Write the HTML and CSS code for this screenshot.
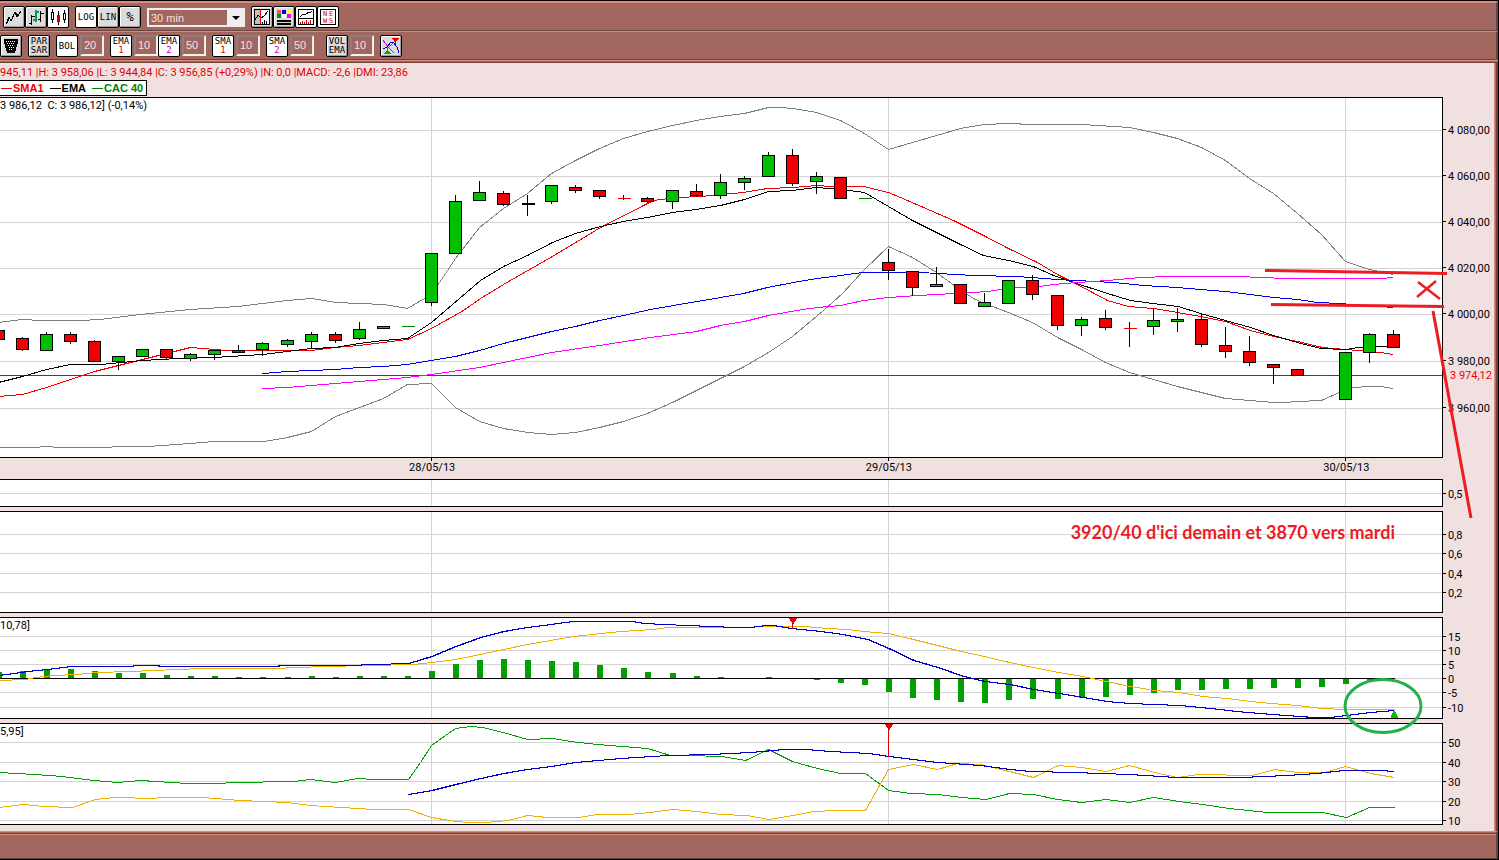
FILE: index.html
```html
<!DOCTYPE html>
<html lang="fr">
<head>
    <meta charset="UTF-8">
    <meta name="viewport" content="width=device-width, initial-scale=1.0">
    <title>CAC 40</title>
    <link rel="stylesheet" href="styles.css">
</head>
<body>
<div class="window">
    <div class="toolbar">
        <div class="group">
            <button class="tool" aria-label="Line"><svg viewBox="0 0 18 18"><path d="M1 16L4 9L6 13L10 4L12 9L16 3" fill="none" stroke="#000"/><path d="M2 15L5 9M11 5L13 8" fill="none" stroke="#000"/></svg></button>
            <button class="tool" aria-label="Bars"><svg viewBox="0 0 18 18"><path d="M4.500 7V17M2 15.500H4M5 8.500H8M13.500 3V14M11 11.500H13M14 5.500H17" stroke="#000"/><path d="M9 2V14M6 12H8M10 4H12" stroke="#00a050" stroke-width="2"/></svg></button>
            <button class="tool on" aria-label="Candles"><svg viewBox="0 0 18 18"><path d="M3.500 1V15M15.500 2V15" stroke="#000"/><path d="M2.500 4.500H4.500V11.500H2.500ZM14.500 5.500H16.500V11.500H14.500Z" fill="#fff" stroke="#000"/><path d="M9.500 3V17" stroke="#000"/><path d="M8 7H11V14H8Z" fill="#d00000"/></svg></button>
        </div>
        <div class="group">
            <button class="tool on">LOG</button>
            <button class="tool">LIN</button>
            <button class="tool percent">%</button>
        </div>
        <div class="period">
            <select aria-label="Period"><option>30 min</option></select>
        </div>
        <div class="group">
            <button class="tool" aria-label="Cursor"><svg viewBox="0 0 18 18"><path d="M1.500 1.500H16.500V16.500H1.500Z" fill="#fff" stroke="#000"/><path d="M2 2H7V16H2Z" fill="#c0c0c0"/><path d="M2 12L5 7L8 10L11 8L15 3" fill="none" stroke="#000"/><path d="M9.500 14V16M11.500 12V16M13.500 13V16" stroke="#000"/><path d="M7.500 1V16" stroke="#e00000"/></svg></button>
            <button class="tool" aria-label="Colors"><svg viewBox="0 0 18 18"><path d="M2 2H6V6H2Z" fill="#ff5050"/><path d="M7 2H11V6H7Z" fill="#0000e0"/><path d="M12 2H16V6H12Z" fill="#ffff40"/><path d="M2 6H6V10H2Z" fill="#009020"/><path d="M7 6H11V10H7Z" fill="#fff"/><path d="M12 6H16V10H12Z" fill="#ff00ff"/><path d="M2 12H16V14H2ZM2 15H16V17H2Z"/></svg></button>
            <button class="tool on" aria-label="Volume"><svg viewBox="0 0 18 18"><path d="M1.500 1.500H16.500V16.500H1.500ZM2 10.500H16" fill="none" stroke="#000"/><path d="M3 9L6 6L8 7L12 4L13 5L15 3" fill="none" stroke="#000"/><path d="M3.500 14V16M5.500 13V16M7.500 14V16M9.500 12V16M11.500 14V16M13.500 12V16" stroke="#e00000"/></svg></button>
            <button class="tool on" aria-label="News"><svg viewBox="0 0 18 18"><path d="M1.500 1.500H16.500V16.500H1.500Z" fill="none" stroke="#000"/><text x="4" y="8">N</text><text x="10" y="8">E</text><text x="4" y="15">W</text><text x="10" y="15">S</text></svg></button>
        </div>
    </div>
    <div class="toolbar indicators">
        <button class="tool" aria-label="Trash"><svg viewBox="0 0 18 18"><path d="M2 2H16V5L13 16H5L2 5Z"/><path d="M4 4.500H14M6 8.500H12M7 12.500H11" stroke="#fff" stroke-dasharray="1 1"/><path d="M5 6.500H13M7 10.500H12" stroke="#fff" stroke-dasharray="1 1"/></svg></button>
        <button class="tool">PAR<br>SAR</button>
        <div class="field"><button class="tool on">BOL</button><input aria-label="BOL" value="20"></div>
        <div class="group">
            <div class="field"><button class="tool on"><span>EMA<b class="one">1</b></span></button><input aria-label="EMA 1" value="10"></div>
            <div class="field"><button class="tool on"><span>EMA<b class="two">2</b></span></button><input aria-label="EMA 2" value="50"></div>
        </div>
        <div class="field"><button class="tool on"><span>SMA<b class="one">1</b></span></button><input aria-label="SMA 1" value="10"></div>
        <div class="field"><button class="tool on"><span>SMA<b class="two">2</b></span></button><input aria-label="SMA 2" value="50"></div>
        <div class="field volume"><button class="tool">VOL<br>EMA</button><input aria-label="VOL EMA" value="10"></div>
        <button class="tool" aria-label="Signals"><svg viewBox="0 0 18 18"><path d="M1 3L6 10L12 16M5 12L14 3" fill="none" stroke="#e000e0"/><path d="M1 12L5 10L9 5L11 5L15 10L17 16" fill="none" stroke="#0000d0"/><path d="M10 1H17L14 5V7H13V5Z" fill="#e00000"/><path d="M2 17L5 13V10H6V13L9 17Z" fill="#00b000"/></svg></button>
    </div>
    <main class="charts">
        <p class="quote">945,11 |H: 3 958,06 |L: 3 944,84 |C: 3 956,85 (+0,29%) |N: 0,0 |MACD: -2,6 |DMI: 23,86</p>
        <div class="legend"><span class="sma">SMA1</span><span class="ema">EMA</span><span class="cac">CAC 40</span></div>

        <section class="row">
            <div class="plot price">
                <p class="title">3 986,12&nbsp; C: 3 986,12] (-0,14%)</p>
                <svg viewBox="-0.5 97.5 1442 359" preserveAspectRatio="none">
                    <path class="grid" d="M-1 130H1442M-1 176H1442M-1 222H1442M-1 268H1442M-1 314H1442M-1 361H1442M-1 408H1442M431 97V457M888 97V457M1345 97V457"/>
                    <path class="last" d="M-1 375H1442"/>
                    <!-- Bollinger bands -->
                    <polyline class="band" points="-2,322 22,319 40,320 80,320 100,319 140,314 190,309 238,306 262,303 287,300 311,298 335,302 383,304 407,308 431,294 455,258 479,227 503,208 527,193 551,173 575,160 599,148 623,138 647,131 672,125 696,120 720,116 744,113 768,107 780,107 792,108 816,112 840,120 864,133 888,149 912,142 936,135 960,128 984,124 1008,123 1032,124 1081,124 1129,127 1153,132 1177,138 1201,147 1225,160 1249,178 1273,193 1297,213 1321,234 1345,261 1369,269 1393,274"/>
                    <polyline class="band" points="-2,447 34,447 46,446 58,447 106,447 118,446 147,446 190,443 214,441 264,441 287,437 311,431 335,416 359,407 383,398 407,384 431,383 455,407 479,421 503,428 527,432 551,434 575,432 599,427 623,421 647,413 672,402 696,390 720,378 744,366 768,352 792,336 823,310 842,293 864,269 888,246 912,257 936,272 955,286 973,298 984,303 1008,312 1032,322 1057,337 1081,349 1105,362 1129,372 1153,379 1177,386 1201,392 1225,398 1249,400 1273,402 1285,402 1297,401 1321,400 1339,392 1352,387 1369,386 1380,386 1393,388"/>
                    <polyline class="red" points="-2,396 22,394 46,387 70,379 94,371 118,365 142,359 166,353 178,350 190,347 202,348 226,350 311,350 335,347 359,345 383,342 407,339 431,328 463,310 480,298 503,284 552,256 600,227 647,203 653,200 677,197 700,196 743,192 767,188 793,187 817,185 830,186 863,186 888,192 900,197 953,220 983,235 1008,248 1037,262 1057,274 1077,284 1107,300 1128,306 1153,308 1177,312 1200,316 1225,321 1250,330 1273,336 1297,341 1322,347 1345,349 1370,351 1380,352 1393,354"/>
                    <polyline class="black" points="-2,382 22,376 46,369 70,364 100,364 142,360 178,358 214,357 262,354 287,351 311,348 335,347 359,343 383,340 407,338 431,322 445,310 480,280 503,266 527,255 552,242 575,233 600,226 623,221 647,217 672,212 696,209 720,205 744,199 768,191 792,190 816,187 840,189 864,192 888,206 912,220 936,232 960,244 983,255 1008,260 1033,266 1053,275 1070,281 1107,293 1130,300 1152,303 1178,306 1200,313 1225,320 1250,327 1273,335 1297,342 1320,348 1345,349 1358,347 1369,346 1393,346"/>
                    <polyline class="blue" points="262,373 287,371 335,369 359,367 383,366 407,364 431,360 455,356 479,350 503,343 527,337 551,331 575,326 599,320 623,315 650,309 673,305 697,301 720,297 743,293 767,287 793,282 817,278 840,275 862,272 920,272 973,275 1017,276 1057,279 1113,282 1143,285 1177,287 1200,289 1225,291 1250,294 1273,297 1297,299 1317,302 1339,303 1393,307"/>
                    <polyline class="magenta" points="262,388 287,387 311,385 335,383 359,381 383,379 407,377 431,374 479,367 503,362 551,352 599,345 650,337 696,331 720,325 744,321 768,315 802,309 817,307 840,305 863,300 888,297 917,295 973,292 987,291 1013,287 1033,287 1053,284 1077,282 1107,280 1140,277 1170,276 1237,276 1285,278 1380,278 1393,277"/>
                    <!-- candles: wicks, then bodies -->
                    <path class="wick" d="M22 336V350M46 331V350M70 331V343M94 339V361M118 355V369M142 348V356M166 349V359M190 352V360M214 349V359M238 344V352M262 341V355M287 338V346M311 331V347M335 331V342M359 321V339M431 252V305M455 194V253M479 180V200M503 190V205M527 194V215M551 184V203M575 184V192M599 189V198M623 194V199M647 196V202M672 190V208M696 183V196M720 173V198M744 175V189M768 151V176M792 148V185M816 171V193M888 248V279M912 271V295M936 266V286M984 292V306M1032 274V299M1057 295V329M1081 316V335M1105 309V329M1129 321V346M1153 307V334M1177 307V331M1201 312V346M1225 326V357M1249 335V365M1273 363V383M1345 351V399M1369 332V362M1393 329V347"/>
                    <path class="up" d="M40 334h12v16h-12zM112 356h12v5h-12zM136 349h12v7h-12zM184 354h12v4h-12zM208 350h12v4h-12zM256 343h12v6h-12zM281 340h12v4h-12zM305 334h12v7h-12zM353 329h12v9h-12zM377 326h12v2h-12zM425 253h12v49h-12zM449 201h12v52h-12zM473 192h12v8h-12zM545 185h12v16h-12zM666 190h12v11h-12zM714 182h12v13h-12zM738 178h12v4h-12zM762 155h12v21h-12zM810 176h12v5h-12zM930 284h12v2h-12zM978 302h12v4h-12zM1002 280h12v23h-12zM1075 319h12v6h-12zM1147 320h12v6h-12zM1171 319h12v2h-12zM1339 352h12v47h-12zM1363 334h12v18h-12z"/>
                    <path class="down" d="M-8 330h12v9h-12zM16 338h12v11h-12zM64 334h12v7h-12zM88 341h12v20h-12zM160 349h12v8h-12zM232 350h12v2h-12zM329 334h12v6h-12zM497 193h12v11h-12zM569 187h12v3h-12zM593 190h12v6h-12zM641 198h12v3h-12zM690 191h12v4h-12zM786 155h12v28h-12zM834 177h12v21h-12zM882 262h12v8h-12zM906 271h12v16h-12zM954 284h12v19h-12zM1026 280h12v14h-12zM1051 295h12v30h-12zM1099 318h12v9h-12zM1195 319h12v25h-12zM1219 345h12v6h-12zM1243 351h12v11h-12zM1267 364h12v3h-12zM1291 369h12v6h-12zM1387 334h12v13h-12z"/>
                    <path class="flat-up" d="M401 326h13M858 198h13M1315 375h13"/>
                    <path class="flat-down" d="M617 198h13M1123 328h13"/>
                    <path class="wick" d="M521 203h13M521 204h13"/>
                </svg>
            </div>
            <svg class="axis price" viewBox="0 97.5 50 361">
                <path d="M0 130h3M0 176h3M0 222h3M0 268h3M0 314h3M0 361h3M0 408h3"/>
                <text x="5" y="134">4 080,00</text><text x="5" y="180">4 060,00</text><text x="5" y="226">4 040,00</text><text x="5" y="272">4 020,00</text><text x="5" y="318">4 000,00</text><text x="5" y="365">3 980,00</text><text x="5" y="412">3 960,00</text>
                <text class="current" x="7" y="379">3 974,12</text>
            </svg>
        </section>

        <div class="row">
            <svg class="dates">
                <line x1="29.9%" x2="29.9%" y1="0" y2="3"/><line x1="61.56%" x2="61.56%" y1="0" y2="3"/><line x1="93.23%" x2="93.23%" y1="0" y2="3"/>
                <text x="29.95%" y="13">28/05/13</text><text x="61.6%" y="13">29/05/13</text><text x="93.3%" y="13">30/05/13</text>
            </svg>
        </div>

        <section class="row">
            <div class="plot thin">
                <svg viewBox="-0.5 479.5 1442 26" preserveAspectRatio="none"><path class="grid" d="M-1 493H1442M431 479V507M888 479V507M1345 479V507"/></svg>
            </div>
            <svg class="axis thin" viewBox="0 478.5 50 28"><path d="M0 493h3"/><text x="5" y="497">0,5</text></svg>
        </section>

        <section class="row">
            <div class="plot">
                <svg viewBox="-0.5 511.5 1442 100" preserveAspectRatio="none"><path class="grid" d="M-1 534H1442M-1 553H1442M-1 573H1442M-1 592H1442M431 511V612M888 511V612M1345 511V612"/></svg>
                <p class="note">3920/40 d'ici demain et 3870 vers mardi</p>
            </div>
            <svg class="axis" viewBox="0 510.5 50 102"><path d="M0 534h3M0 553h3M0 573h3M0 592h3"/><text x="5" y="538">0,8</text><text x="5" y="557">0,6</text><text x="5" y="577">0,4</text><text x="5" y="596">0,2</text></svg>
        </section>

        <section class="row">
            <div class="plot">
                <p class="title">10,78]</p>
                <svg viewBox="-0.5 617.5 1442 100" preserveAspectRatio="none">
                    <path class="grid" d="M-1 636H1442M-1 650H1442M-1 664H1442M-1 678H1442M-1 692H1442M-1 707H1442M431 617V718M888 617V718M1345 617V718"/>
                    <path class="bars" transform="translate(-0.5 -0.5)" d="M-1 672V678M23 671V678M47 669V678M71 669V678M95 671V678M119 673V678M143 673V678M167 675V678M191 676V678M215 676V678M239 677V678M263 677V678M288 677V678M312 676V678M336 677V678M360 676V678M384 676V678M408 676V678M432 671V678M456 664V678M480 660V678M504 659V678M528 660V678M552 661V678M576 662V678M600 665V678M624 668V678M648 672V678M673 673V678M697 676V678M721 677V678M769 677V678"/>
                    <path class="bars" transform="translate(-0.5 0.5)" d="M817 678V679M841 678V682M865 678V684M889 678V691M913 678V697M937 678V699M961 678V701M985 678V702M1009 678V699M1033 678V698M1058 678V698M1082 678V697M1106 678V696M1130 678V694M1154 678V692M1178 678V689M1202 678V689M1226 678V688M1250 678V688M1274 678V687M1298 678V687M1322 678V686M1346 678V683M1370 678V680"/>
                    <path class="wick" d="M-1 678H1394"/>
                    <polyline class="orange" points="-2,680 25,679 35,677 53,675 77,674 97,672 130,671 177,669 203,668 273,668 323,666 370,665 413,664 440,661 455,659 480,654 503,649 527,644 550,640 573,636 620,631 653,629 667,627 707,627 803,626 827,628 847,629 863,631 888,633 913,639 937,645 961,651 984,656 1009,662 1033,667 1058,672 1082,676 1106,681 1130,686 1154,690 1178,692 1202,696 1226,698 1250,701 1271,703 1297,705 1322,708 1345,709 1394,709"/>
                    <polyline class="navy" points="-2,675 13,673 27,671 47,669 70,666 131,666 134,665 156,665 160,666 276,666 280,665 349,665 373,664 408,663 431,656 455,646 480,637 503,631 527,627 550,624 572,621 632,621 643,623 663,624 710,626 735,627 750,627 765,625 773,625 790,628 820,631 842,634 867,639 888,648 913,660 937,667 963,676 984,681 1009,684 1033,689 1058,693 1082,697 1106,701 1129,703 1179,705 1210,708 1236,711 1271,714 1313,717 1330,717 1345,715 1370,712 1393,710"/>
                    <path class="sell" d="M788.500 617.500h8l-4 7z"/>
                    <path class="stem" d="M792 618V628"/>
                    <path class="buy" d="M1393 710h1l3 6v2h-7v-2z"/>
                </svg>
            </div>
            <svg class="axis" viewBox="0 616.5 50 102"><path d="M0 636h3M0 650h3M0 664h3M0 678h3M0 692h3M0 707h3"/><text x="5" y="640">15</text><text x="5" y="654">10</text><text x="5" y="668">5</text><text x="5" y="682">0</text><text x="5" y="696">-5</text><text x="5" y="711">-10</text></svg>
        </section>

        <section class="row">
            <div class="plot">
                <p class="title">5,95]</p>
                <svg viewBox="-0.5 723.5 1442 100" preserveAspectRatio="none">
                    <path class="grid" d="M-1 742H1442M-1 762H1442M-1 781H1442M-1 801H1442M-1 820H1442M431 723V824M888 723V824M1345 723V824"/>
                    <polyline class="green" points="-2,772 17,773 50,775 70,777 93,780 117,782 140,780 187,783 218,783 233,782 293,781 310,779 335,782 357,778 373,779 408,779 420,762 431,745 455,728 470,726 482,727 503,732 527,739 553,738 570,741 597,744 647,748 670,755 687,755 722,756 745,760 768,749 792,761 817,768 840,773 865,773 888,790 910,793 938,794 961,797 986,799 1009,793 1033,794 1057,799 1081,802 1106,799 1129,802 1153,797 1179,801 1202,804 1229,808 1267,812 1322,812 1346,817 1369,807 1394,807"/>
                    <polyline class="orange" points="-2,807 23,804 43,806 72,807 95,799 115,797 153,798 160,797 202,797 240,800 287,802 310,805 357,808 373,809 408,809 431,817 455,821 470,822 485,822 508,820 527,815 547,817 578,817 597,814 628,814 650,812 672,809 697,811 720,814 747,815 768,819 793,815 813,811 837,810 865,810 888,769 913,764 937,769 957,763 980,764 1009,771 1033,777 1058,765 1081,767 1106,771 1129,765 1154,772 1177,777 1198,774 1252,775 1274,769 1297,772 1324,772 1345,766 1370,773 1394,777"/>
                    <polyline class="navy" points="408,794 431,790 455,784 480,778 503,773 527,769 550,766 575,762 620,758 667,755 710,754 750,752 773,750 783,749 805,749 830,751 868,753 888,756 920,760 937,762 980,765 1009,769 1030,771 1072,772 1129,774 1160,776 1175,777 1240,777 1286,775 1316,773 1343,770 1380,770 1393,771"/>
                    <path class="sell" d="M884.500 723.500h8l-4 7z"/>
                    <path class="stem" d="M888 724V756"/>
                </svg>
            </div>
            <svg class="axis" viewBox="0 722.5 50 102"><path d="M0 742h3M0 762h3M0 781h3M0 801h3M0 820h3"/><text x="5" y="746">50</text><text x="5" y="766">40</text><text x="5" y="785">30</text><text x="5" y="805">20</text><text x="5" y="824">10</text></svg>
        </section>

        <!-- hand-drawn marks over the panels -->
        <svg class="marks" viewBox="0 63 1494 768" preserveAspectRatio="none">
            <path d="M1265 270.500L1447 273.500M1271 304.500L1444 306.500M1433 311L1471 518" stroke-width="3"/>
            <path d="M1418 282L1440 299M1417 297L1436 281" stroke-width="2.500"/>
            <ellipse cx="1383" cy="706" rx="38" ry="26.500" stroke-width="3"/>
        </svg>
    </main>
    <footer class="statusbar"></footer>
</div>
</body>
</html>
```

FILE: styles.css
```css
* {
    box-sizing: border-box;
}
body {
    margin: 0;
    background: #a1665e;
    font-family: Roboto, Arial, sans-serif;
    font-size: 11px;
}
p {
    margin: 0;
}
.window {
    display: flex;
    flex-direction: column;
    min-height: 100vh;
    border-top: 1px solid #000;
    border-right: 1px solid #000;
    border-bottom: 1px solid #000;
    overflow: hidden;
}

/* toolbars */
.toolbar {
    display: flex;
    align-items: flex-start;
    gap: 6px;
    height: 30px;
    padding: 3px 3px 0;
    border-top: 2px solid #e08878;
    border-right: 2px solid #6b4540;
    border-bottom: 1px solid #6b4540;
}
.indicators {
    height: 29px;
    padding: 3px 0 0;
    border-top-width: 1px;
}
.group,
.field {
    display: flex;
}
.field {
    gap: 2px;
}
.volume {
    margin-left: 6px;
}
.tool {
    display: flex;
    align-items: center;
    justify-content: center;
    width: 22px;
    height: 22px;
    padding: 0;
    border: 1px solid #000;
    border-radius: 2px;
    background: #dcdcdc;
    box-shadow: inset 1px 1px #fff, inset -1px -1px #a0a0a0;
    color: #000;
    font: 9px/9px "DejaVu Sans Mono", monospace;
}
.tool.on {
    background: #fff;
    box-shadow: none;
}
.tool.percent {
    font-size: 12px;
}
.tool svg {
    width: 18px;
    height: 18px;
    flex: none;
    shape-rendering: crispEdges;
}
.tool text {
    font-size: 7px;
    fill: #e00000;
}
.tool b {
    display: block;
    font-weight: normal;
}
.one {
    color: #e00000;
}
.two {
    color: #c000c0;
}
.field input {
    width: 24px;
    height: 21px;
    padding: 0 0 2px 2px;
    border: 2px solid;
    border-color: #8a8080 #f4f0f0 #f4f0f0 #8a8080;
    border-radius: 0;
    background: #a1665e;
    color: #f0e4e2;
    font: 11px "Liberation Sans", Arial, sans-serif;
}
.period {
    position: relative;
    width: 98px;
    height: 19px;
    margin-top: 2px;
}
.period select {
    width: 100%;
    height: 100%;
    padding: 0 2px;
    border: 2px solid #f0eeee;
    border-right-width: 18px;
    border-radius: 0;
    appearance: none;
    background: #a1665e;
    color: #f0e4e2;
    font: 11px "Liberation Sans", Arial, sans-serif;
}
.period::after {
    content: "";
    position: absolute;
    right: 5px;
    top: 8px;
    border: 4px solid transparent;
    border-top-color: #000;
    pointer-events: none;
}

/* charts */
.charts {
    position: relative;
    border-top: 3px solid #6b4540;
    border-image: linear-gradient(#e08878 0 1px, #a1665e 1px 2px, #6b4540 2px) 3 0 0 0;
    background: #f0e0e0;
    box-shadow: inset -2px 0 #6b4540, inset -3px 0 #b06a60, inset -4px 0 #e08878;
    height: 771px;
    padding-right: 5px;
}
.quote {
    height: 17px;
    line-height: 19px;
    color: #e00000;
    white-space: nowrap;
}
.legend {
    display: flex;
    gap: 6px;
    width: 147px;
    height: 16px;
    margin-bottom: 1px;
    padding-left: 1px;
    border: 1px solid #000;
    border-left: 0;
    background: #fff;
    font: bold 11px/14px "Liberation Sans", Arial, sans-serif;
    white-space: nowrap;
}
.legend span {
    display: flex;
    align-items: center;
    gap: 1px;
}
.legend span::before {
    content: "";
    width: 11px;
    height: 1px;
    background: currentColor;
}
.sma {
    color: #f00000;
}
.ema {
    color: #000;
}
.cac {
    color: #008000;
}
.row {
    display: flex;
}
.row + section {
    margin-top: 4px;
}
.plot {
    position: relative;
    flex: 1;
    height: 102px;
    border: 1px solid #000;
    border-left: 0;
    background: #fff;
}
.plot svg {
    display: block;
    width: 100%;
    height: 100%;
    overflow: hidden;
    fill: none;
    stroke-width: 1;
    shape-rendering: crispEdges;
}
.axis {
    flex: none;
    width: 50px;
    height: 102px;
    overflow: visible;
}
.plot.price,
.axis.price {
    height: 361px;
}
.plot.thin,
.axis.thin {
    height: 28px;
}
.title {
    position: absolute;
    left: 0;
    top: 1px;
    line-height: 13px;
}
.note {
    position: absolute;
    right: 47px;
    top: 9px;
    color: #ed1c24;
    font: bold 18px/22px Lato, sans-serif;
}
.axis path,
.dates line {
    stroke: #000;
    shape-rendering: crispEdges;
}
.axis text,
.dates text {
    fill: #000;
}
.axis .current {
    fill: #f00000;
}
.dates {
    flex: 1;
    height: 21px;
    margin-right: 50px;
    overflow: visible;
}
.dates text {
    text-anchor: middle;
}
.row:has(.dates) + section {
    margin-top: 0;
}
.grid { stroke: #d4d4d4; }
.last { stroke: #e00000; }
.band { stroke: #808080; }
.red { stroke: #f00000; }
.black, .wick { stroke: #000; }
.blue { stroke: #0000f0; }
.magenta { stroke: #ff00ff; }
.orange { stroke: #f0b000; }
.green { stroke: #00a000; }
.navy {
    stroke: #0000c8;
    filter: drop-shadow(1px 0 0 #0000c8);
}
.up { fill: #00c000; stroke: #000; }
.down { fill: #f00000; stroke: #000; }
.flat-up { stroke: #008000; }
.flat-down { stroke: #f00000; }
.plot .bars { stroke: #00a000; stroke-width: 6; }
.sell { fill: #e00000; }
.stem { stroke: #e00000; }
.buy { fill: #00c000; }
.marks {
    position: absolute;
    left: 0;
    top: 0;
    width: calc(100% - 4px);
    height: 768px;
    fill: none;
    stroke: #ed1c24;
    pointer-events: none;
}
.marks ellipse {
    stroke: #22b14c;
}

.statusbar {
    flex: 1;
    min-height: 28px;
    border-top: 1px solid #e08878;
    border-right: 2px solid #6b4540;
    border-bottom: 1px solid #6b4540;
    box-shadow: inset 0 1px #a1665e, inset 0 2px #6b4540, inset 0 3px #e08878;
}
```
